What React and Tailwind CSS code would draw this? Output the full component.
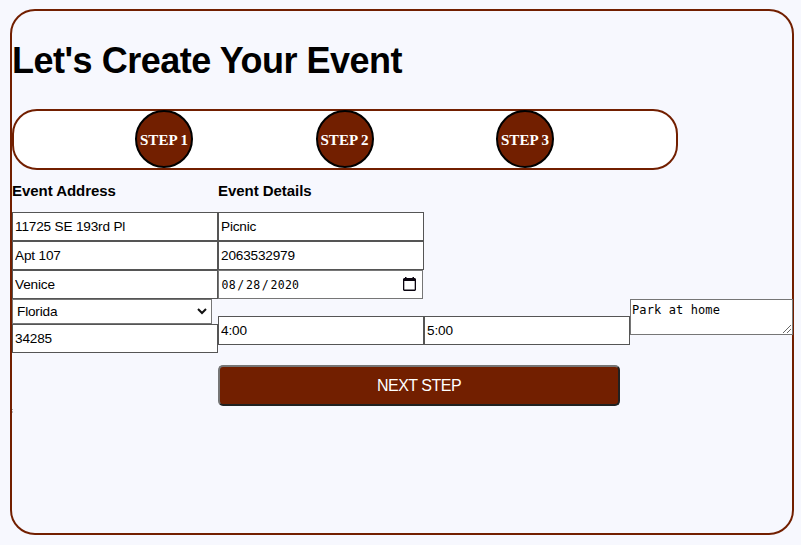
const sans = "font-['Liberation_Sans',Arial,sans-serif]";

function Field({ label, value, className = "" }) {
  return (
    <input
      type="text"
      aria-label={label}
      defaultValue={value}
      className={`block h-[29px] w-[206px] shrink-0 border border-[#555] bg-white px-[2px] text-[13.6px] tracking-[-0.17px] text-black outline-none ${className}`}
    />
  );
}

function Step({ n }) {
  return (
    <div className="-mt-px flex size-[58px] shrink-0 items-center justify-center rounded-full border-2 border-black bg-[#721f00] pt-[2px] font-['Liberation_Serif','Times_New_Roman',serif] text-[15px] leading-none font-bold whitespace-nowrap text-white">
      STEP {n}
    </div>
  );
}

export default function App() {
  return (
    <div className={`h-[545px] w-[801px] overflow-hidden bg-[#f7f8fe] pt-[9px] pl-[10px] text-black ${sans}`}>
      <main className="h-[526px] w-[784px] rounded-[25px] border-2 border-[#721f00]">
        <h1 className="h-[98px] pt-[29px] text-[36px] leading-[42px] font-bold tracking-[-0.49px] whitespace-nowrap">
          Let's Create Your Event
        </h1>
        <div className="flex h-[61px] w-[666px] gap-[122.5px] rounded-[25px] border-2 border-[#721f00] bg-white pl-[121px]">
          <Step n={1} />
          <Step n={2} />
          <Step n={3} />
        </div>
        <div className="flex">
          <section className="w-[206px] shrink-0">
            <h2 className="h-[42px] pt-[12px] text-[15px] leading-[18px] font-bold tracking-[-0.05px]">Event Address</h2>
            <Field label="Street" value="11725 SE 193rd Pl" />
            <Field label="Unit" value="Apt 107" />
            <Field label="City" value="Venice" />
            <div className="flex h-[25px] w-[200px] items-center justify-between border border-[#767676] bg-white pr-[4px] pl-[4px] text-[13.6px] tracking-[-0.17px]">
              <span className="pt-px">Florida</span>
              <svg width="10" height="7" viewBox="0 0 10 7" fill="none" stroke="#111" strokeWidth="2">
                <path d="M1 1L5 5L9 1" />
              </svg>
            </div>
            <Field label="Zip" value="34285" />
            <div className="mt-[56px] flex w-px flex-col gap-px">
              <span className="h-px bg-[#a9a9ab]" />
              <span className="h-[2px] bg-[#bcbcc0]" />
            </div>
          </section>
          <section className="w-[575px] shrink-0">
            <h2 className="h-[42px] pt-[12px] text-[15px] leading-[18px] font-bold tracking-[-0.05px]">Event Details</h2>
            <Field label="Event name" value="Picnic" />
            <Field label="Phone" value="2063532979" />
            <div className="flex h-[29px] w-[205px] items-center justify-between border border-[#767676] bg-white pr-[6px] pl-[2.5px] font-['DejaVu_Sans_Mono',monospace] text-[11.5px] tracking-[0.3px]">
              <span className="flex gap-[1.4px] pt-[2px]">
                <span>08</span>
                <span>/</span>
                <span>28</span>
                <span>/</span>
                <span>2020</span>
              </span>
              <svg width="13" height="15" viewBox="0 0 13 15">
                <path d="M2 0h1.5v1h6V0H11v1h1l1 1v11l-1 1H1l-1-1V2l1-1h1zM1.3 4v8.5h10.4V4z" fill="#0b0510" fillRule="evenodd" />
              </svg>
            </div>
            <div className="flex">
              <Field label="Start" value="4:00" className="mt-[17px]" />
              <Field label="End" value="5:00" className="mt-[17px]" />
              <div className="flex h-[36px] w-[163px] items-end justify-between border border-[#767676] bg-white pr-px pb-px pl-px font-['DejaVu_Sans_Mono',monospace] text-[12px] tracking-[0.11px]">
                <span className="self-start pt-[2px] leading-[16px]">Park at home</span>
                <svg width="8" height="8" viewBox="0 0 8 8" stroke="#555" strokeWidth="0.9">
                  <path d="M0 8L8 0M4 8L8 4" />
                </svg>
              </div>
            </div>
            <button className="mt-[20px] block h-[41px] w-[402px] rounded-[5px] border-2 border-t-[#767676] border-r-[#212121] border-b-[#212121] border-l-[#767676] bg-[#721f00] text-[16px] leading-none tracking-[-0.5px] text-white">
              NEXT STEP
            </button>
          </section>
        </div>
      </main>
    </div>
  );
}
